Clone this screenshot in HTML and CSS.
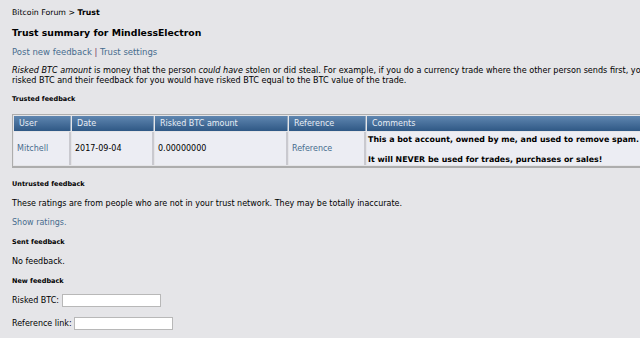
FILE: index.html
```html
<!DOCTYPE html>
<html lang="en">
<head>
    <meta charset="UTF-8">
    <title>Trust summary for MindlessElectron</title>
    <link rel="stylesheet" href="styles.css">
</head>
<body>
    <div class="page">
        <div class="nav"><a href="#">Bitcoin Forum</a> &gt; <b>Trust</b></div>

        <h1>Trust summary for MindlessElectron</h1>

        <p class="links"><a href="#">Post new feedback</a> <span class="sep">|</span> <a href="#">Trust settings</a></p>

        <p class="intro"><i>Risked BTC amount</i> is money that the person <i>could have</i> stolen or did steal. For example, if you do a currency trade where the other person sends first, your<br>risked BTC and their feedback for you would have risked BTC equal to the BTC value of the trade.</p>

        <h2>Trusted feedback</h2>
        <table class="feedback">
            <tr>
                <th class="c-user">User</th>
                <th class="c-date">Date</th>
                <th class="c-btc">Risked BTC amount</th>
                <th class="c-ref">Reference</th>
                <th class="c-comment">Comments</th>
            </tr>
            <tr>
                <td><a href="#">Mitchell</a></td>
                <td>2017-09-04</td>
                <td>0.00000000</td>
                <td><a href="#">Reference</a></td>
                <td class="comment"><b>This a bot account, owned by me, and used to remove spam.</b><br><br><b>It will NEVER be used for trades, purchases or sales!</b></td>
            </tr>
        </table>

        <h2>Untrusted feedback</h2>
        <p>These ratings are from people who are not in your trust network. They may be totally inaccurate.</p>
        <p><a href="#">Show ratings.</a></p>

        <h2>Sent feedback</h2>
        <p>No feedback.</p>

        <h2>New feedback</h2>
        <form>
            <p class="field">Risked BTC: <input type="text"></p>
            <p class="field">Reference link: <input type="text"></p>
        </form>
    </div>
</body>
</html>
```

FILE: styles.css
```css
html {
    overflow: hidden;
}
body {
    margin: 0;
    background: #e5e5e8;
    color: #000;
    font-family: "DejaVu Sans", Verdana, sans-serif;
    font-size: 8px;
}
a {
    color: #476c8e;
    text-decoration: none;
}
.page {
    width: 720px;
    padding: 8px 12px;
}
.nav {
    font-size: 7.8px;
    line-height: 10px;
    margin-bottom: 9px;
}
.nav a {
    color: #000;
}
h1 {
    font-size: 9.3px;
    line-height: 12px;
    margin: 0 0 8px;
}
h2 {
    font-size: 6.5px;
    line-height: 10px;
    margin: 1px 0 10px;
}
p {
    margin: 0 0 9px;
    line-height: 10px;
}
.links {
    font-size: 8.5px;
    margin-bottom: 8px;
}
.links .sep {
    color: #7a2e63;
}
.intro {
    font-size: 8.1px;
    white-space: nowrap;
}
.feedback {
    border: 1px solid #adadad;
    border-bottom-width: 2px;
    border-collapse: separate;
    border-spacing: 1px;
    background: #e5e5e8;
    margin: 10px 0 11px;
    width: 700px;
}
.feedback th {
    background: linear-gradient(#5f86b0, #2f5885);
    color: #e8eef5;
    font-weight: normal;
    text-align: left;
    padding: 2px 5px;
    height: 11px;
    border-right: 1px solid #8aa3bd;
}
.feedback td {
    background: #ecedf3;
    padding: 1px 3px;
    border-right: 2px solid #c9c9cf;
    white-space: nowrap;
}
.feedback td.comment {
    line-height: 10px;
    font-size: 7.9px;
    padding: 3px 2px 0 1px;
}
.c-user { width: 46px; }
.c-date { width: 71px; }
.c-btc { width: 122px; }
.c-ref { width: 66px; }
form {
    margin-top: -2px;
}
.field {
    margin-bottom: 10px;
}
.field input {
    width: 93px;
    height: 9px;
    border: 1px solid #b8b8b8;
    background: #fff;
    padding: 1px 2px;
    margin: 0;
    vertical-align: middle;
}
```
